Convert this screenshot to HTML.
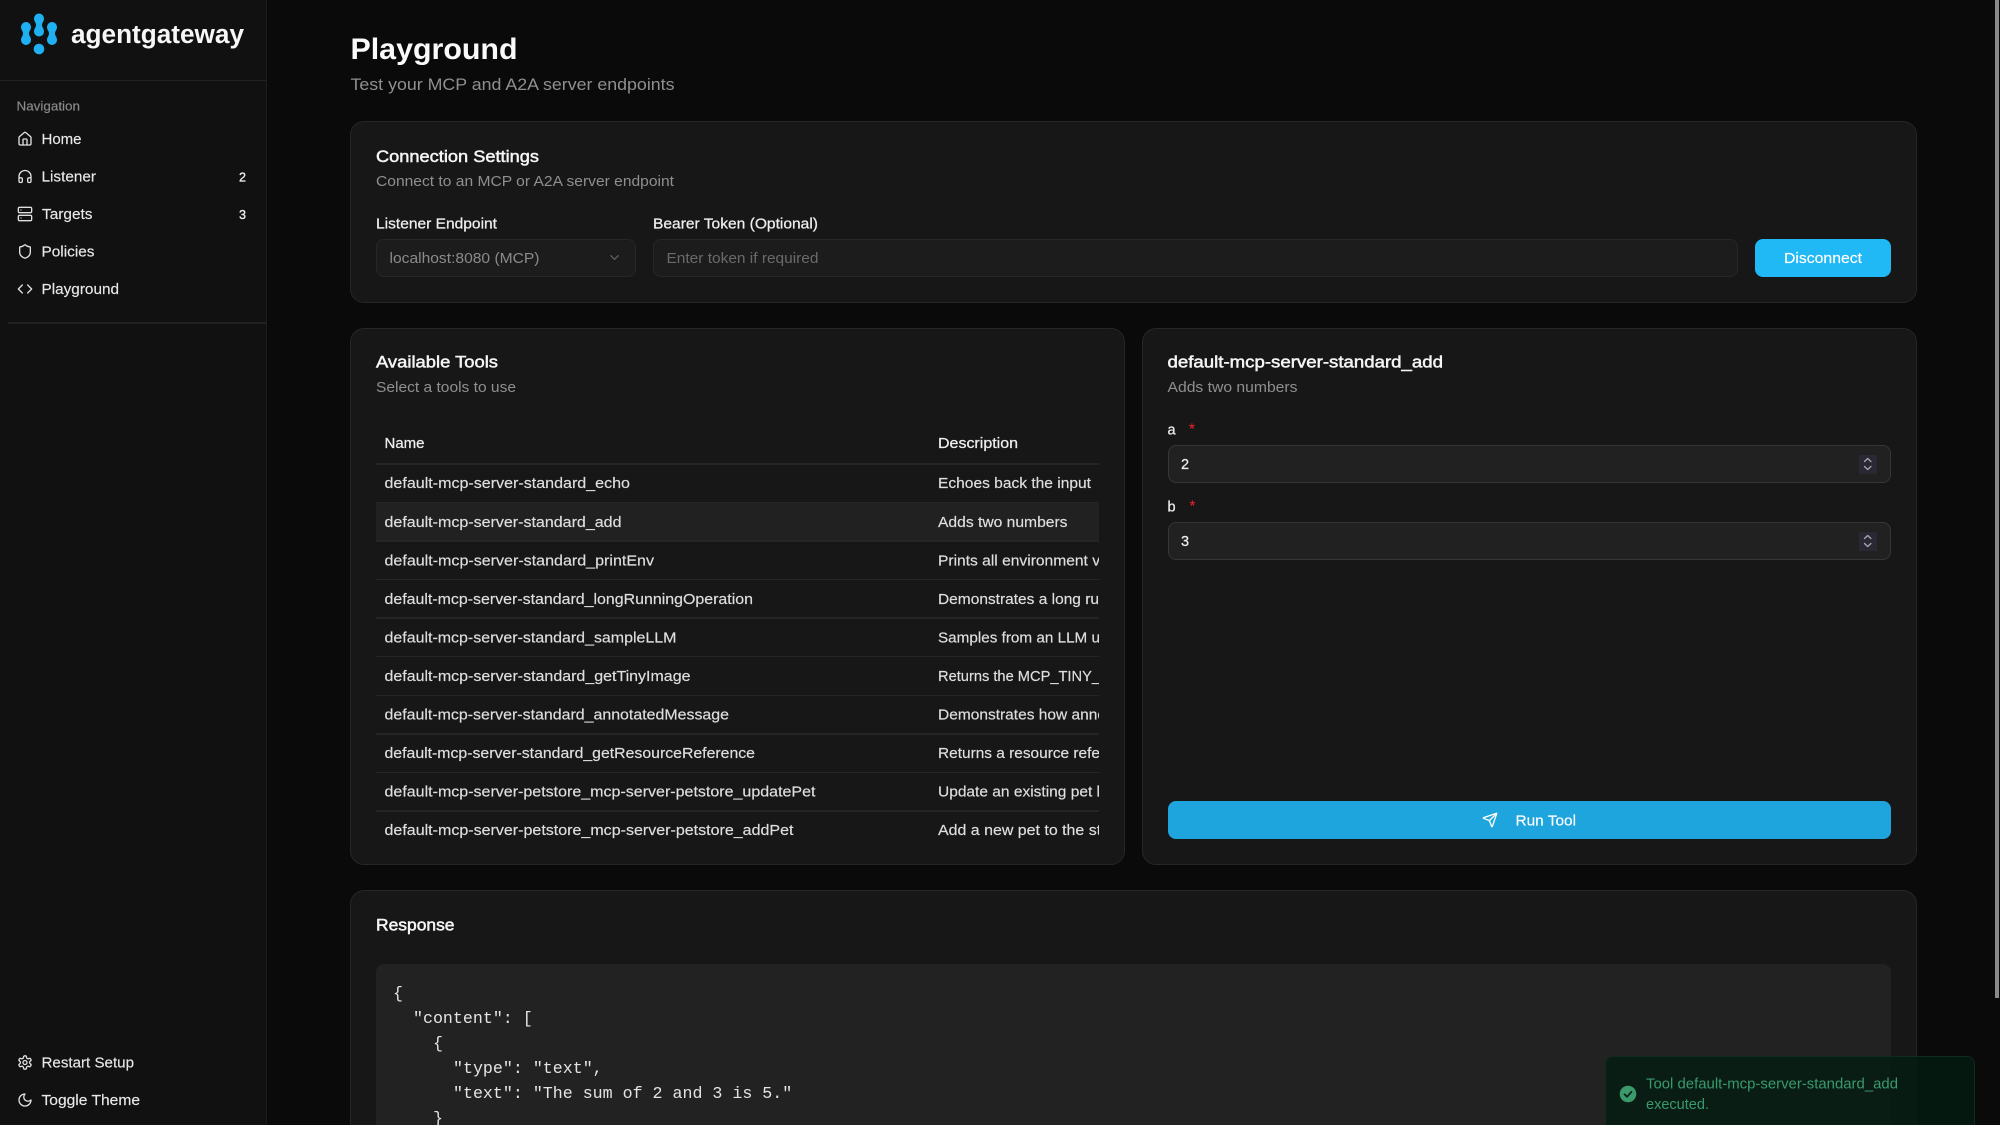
<!DOCTYPE html>
<html lang="en">
<head>
<meta charset="utf-8">
<title>Playground</title>
<style>
html,body{margin:0;padding:0;width:2000px;height:1125px;overflow:hidden;background:#0a0a0a;}
body{position:relative;font-family:"Liberation Sans",sans-serif;}
.b{position:absolute;box-sizing:border-box;}
.card{background:#171717;border:1.5px solid #262626;border-radius:14px;}
.field{background:#1c1c1c;border:1.5px solid #272727;border-radius:8px;}
.num{background:#212121;border:1.5px solid #363636;border-radius:8px;}
.spin{background:#2a2833;}
.line{background:#252525;height:1.5px;left:376px;width:723px;}
svg{position:absolute;left:0;top:0;}
text{font-family:"Liberation Sans",sans-serif;font-size:14.5px;fill:#e8e8e8;stroke:#e8e8e8;stroke-width:.15px;}
.m{font-size:14.5px;fill:#8f8f8f;stroke:none;}
.h{font-size:16.5px;fill:#f5f5f5;stroke:#f5f5f5;stroke-width:.5px;}
.l{font-size:14.5px;fill:#eeeeee;stroke:#eeeeee;stroke-width:.25px;}
.n{font-size:14.5px;fill:#dedede;stroke:#dedede;stroke-width:.18px;}
.c{font-family:"Liberation Mono",monospace;font-size:16.64px;fill:#e4e4e4;stroke:none;}
.t{font-size:14.5px;fill:#3a9a6c;stroke:none;}
.ic{fill:none;stroke:#e0e0e0;stroke-width:2;stroke-linecap:round;stroke-linejoin:round;}
</style>
</head>
<body>
<!-- sidebar -->
<div class="b" style="left:0;top:0;width:267px;height:1125px;background:#111111;border-right:1.5px solid #1c1c1c;"></div>
<div class="b" style="left:0;top:79.5px;width:266px;height:1.5px;background:#222;"></div>
<div class="b" style="left:8px;top:322px;width:258px;height:1.5px;background:#222;"></div>

<!-- connection card -->
<div class="b card" style="left:350px;top:121px;width:1567px;height:181.5px;"></div>
<div class="b field" style="left:376px;top:239px;width:260px;height:37.5px;"></div>
<div class="b field" style="left:653px;top:239px;width:1085px;height:37.5px;"></div>
<div class="b" style="left:1755px;top:239px;width:136px;height:37.5px;background:#20b8f5;border-radius:8px;"></div>

<!-- tools card -->
<div class="b card" style="left:350px;top:328px;width:775px;height:537px;"></div>
<div class="b" style="left:376px;top:502px;width:723px;height:39px;background:#212121;"></div>
<div class="b line" style="top:463px;"></div>
<div class="b line" style="top:501.5px;"></div>
<div class="b line" style="top:540px;"></div>
<div class="b line" style="top:578.5px;"></div>
<div class="b line" style="top:617px;"></div>
<div class="b line" style="top:655.5px;"></div>
<div class="b line" style="top:694.5px;"></div>
<div class="b line" style="top:733px;"></div>
<div class="b line" style="top:771.5px;"></div>
<div class="b line" style="top:810px;"></div>

<!-- form card -->
<div class="b card" style="left:1142px;top:328px;width:775px;height:537px;"></div>
<div class="b num" style="left:1167.5px;top:445px;width:723.5px;height:38px;"></div>
<div class="b num" style="left:1167.5px;top:522px;width:723.5px;height:38px;"></div>
<div class="b spin" style="left:1858.5px;top:454.5px;width:18.5px;height:19px;"></div>
<div class="b spin" style="left:1858.5px;top:531.5px;width:18.5px;height:19px;"></div>
<div class="b" style="left:1167.5px;top:801px;width:723.5px;height:38px;background:#1ea5dd;border-radius:8px;"></div>

<!-- response card -->
<div class="b card" style="left:350px;top:890px;width:1567px;height:235px;border-bottom:none;border-radius:14px 14px 0 0;"></div>
<div class="b" style="left:376px;top:964px;width:1515px;height:161px;background:#222222;border-radius:8px 8px 0 0;"></div>

<!-- scrollbar -->
<div class="b" style="left:1995px;top:0;width:4px;height:998px;background:#8a8a8a;"></div>

<svg width="2000" height="1125" viewBox="0 0 2000 1125" xmlns="http://www.w3.org/2000/svg">
<defs><clipPath id="tc"><rect x="930" y="460" width="169" height="400"/></clipPath></defs>

<!-- logo -->
<g fill="#1fb0f2">
<path d="M21 27a5 5 0 0 1 10 0c0 3-2 4-2 6.5s2 3.5 2 6.5a5 5 0 0 1-10 0c0-3 2-4 2-6.5s-2-3.5-2-6.500z"/>
<path d="M34 18.500a5 5 0 0 1 10 0c0 3-2 4-2 6.5s2 3.500 2 6.500a5 5 0 0 1-10 0c0-3 2-4 2-6.500s-2-3.500-2-6.500z"/>
<path d="M47 27a5 5 0 0 1 10 0c0 3-2 4-2 6.5s2 3.500 2 6.500a5 5 0 0 1-10 0c0-3 2-4 2-6.500s-2-3.500-2-6.500z"/>
<circle cx="39" cy="49" r="5.300"/>
</g>
<text x="71" y="43" textLength="173" lengthAdjust="spacingAndGlyphs" style="font-size:25.5px;font-weight:bold;fill:#f7f7f7;stroke:none">agentgateway</text>

<!-- nav -->
<text x="16.500" y="110.500" textLength="63.500" lengthAdjust="spacingAndGlyphs" style="font-size:12.5px;fill:#8a8a8a;stroke:#8a8a8a">Navigation</text>

<svg x="17" y="131" width="16" height="16" viewBox="0 0 24 24" class="ic"><path d="M15 21v-8a1 1 0 0 0-1-1h-4a1 1 0 0 0-1 1v8"/><path d="M3 10a2 2 0 0 1 .709-1.528l7-5.999a2 2 0 0 1 2.582 0l7 5.999A2 2 0 0 1 21 10v9a2 2 0 0 1-2 2H5a2 2 0 0 1-2-2z"/></svg>
<text x="41.500" y="144" textLength="40" lengthAdjust="spacingAndGlyphs">Home</text>

<svg x="17" y="168.500" width="16" height="16" viewBox="0 0 24 24" class="ic"><path d="M3 14h3a2 2 0 0 1 2 2v3a2 2 0 0 1-2 2H5a2 2 0 0 1-2-2v-7a9 9 0 0 1 18 0v7a2 2 0 0 1-2 2h-1a2 2 0 0 1-2-2v-3a2 2 0 0 1 2-2h3"/></svg>
<text x="41.500" y="181.500" textLength="54.500" lengthAdjust="spacingAndGlyphs">Listener</text>
<text x="239" y="181.500" style="font-size:12.5px;fill:#f0f0f0;stroke:#f0f0f0;stroke-width:.3px" textLength="7" lengthAdjust="spacingAndGlyphs">2</text>

<svg x="17" y="206" width="16" height="16" viewBox="0 0 24 24" class="ic"><rect x="2" y="2" width="20" height="8" rx="2"/><rect x="2" y="14" width="20" height="8" rx="2"/><path d="M6 6h.01M6 18h.01"/></svg>
<text x="42" y="219" textLength="50.500" lengthAdjust="spacingAndGlyphs">Targets</text>
<text x="239" y="219" style="font-size:12.5px;fill:#f0f0f0;stroke:#f0f0f0;stroke-width:.3px" textLength="7" lengthAdjust="spacingAndGlyphs">3</text>

<svg x="17" y="243.500" width="16" height="16" viewBox="0 0 24 24" class="ic"><path d="M20 13c0 5-3.500 7.500-7.660 8.950a1 1 0 0 1-.67-.01C7.500 20.500 4 18 4 13V6a1 1 0 0 1 1-1c2 0 4.500-1.200 6.240-2.720a1.170 1.170 0 0 1 1.520 0C14.510 3.810 17 5 19 5a1 1 0 0 1 1 1z"/></svg>
<text x="41.500" y="256.500" textLength="53" lengthAdjust="spacingAndGlyphs">Policies</text>

<svg x="17" y="281" width="16" height="16" viewBox="0 0 24 24" class="ic"><path d="m16 18 6-6-6-6"/><path d="m8 6-6 6 6 6"/></svg>
<text x="41.500" y="294" textLength="77.500" lengthAdjust="spacingAndGlyphs">Playground</text>

<svg x="17" y="1054.500" width="16" height="16" viewBox="0 0 24 24" class="ic"><path d="M12.220 2h-.44a2 2 0 0 0-2 2v.18a2 2 0 0 1-1 1.730l-.43.25a2 2 0 0 1-2 0l-.15-.08a2 2 0 0 0-2.730.73l-.22.38a2 2 0 0 0 .73 2.730l.15.1a2 2 0 0 1 1 1.720v.51a2 2 0 0 1-1 1.740l-.15.09a2 2 0 0 0-.73 2.730l.22.38a2 2 0 0 0 2.730.73l.15-.08a2 2 0 0 1 2 0l.43.25a2 2 0 0 1 1 1.730V20a2 2 0 0 0 2 2h.44a2 2 0 0 0 2-2v-.18a2 2 0 0 1 1-1.730l.43-.25a2 2 0 0 1 2 0l.15.08a2 2 0 0 0 2.730-.73l.22-.39a2 2 0 0 0-.73-2.730l-.15-.08a2 2 0 0 1-1-1.740v-.5a2 2 0 0 1 1-1.740l.15-.09a2 2 0 0 0 .73-2.730l-.22-.38a2 2 0 0 0-2.730-.73l-.15.08a2 2 0 0 1-2 0l-.43-.25a2 2 0 0 1-1-1.730V4a2 2 0 0 0-2-2z"/><circle cx="12" cy="12" r="3"/></svg>
<text x="41.500" y="1067.500" textLength="92.500" lengthAdjust="spacingAndGlyphs">Restart Setup</text>

<svg x="17" y="1092" width="16" height="16" viewBox="0 0 24 24" class="ic"><path d="M12 3a6 6 0 0 0 9 9 9 9 0 1 1-9-9Z"/></svg>
<text x="41.500" y="1105" textLength="98.500" lengthAdjust="spacingAndGlyphs">Toggle Theme</text>

<!-- header -->
<text x="350.500" y="59" textLength="167" lengthAdjust="spacingAndGlyphs" style="font-size:30px;font-weight:bold;fill:#fafafa;stroke:none">Playground</text>
<text x="350.500" y="90" textLength="324" lengthAdjust="spacingAndGlyphs" style="font-size:16.500px;fill:#8f8f8f;stroke:none">Test your MCP and A2A server endpoints</text>

<!-- connection -->
<text class="h" x="376" y="162" textLength="163" lengthAdjust="spacingAndGlyphs">Connection Settings</text>
<text class="m" x="376" y="186" textLength="298" lengthAdjust="spacingAndGlyphs">Connect to an MCP or A2A server endpoint</text>
<text class="l" x="376" y="228.500" textLength="121" lengthAdjust="spacingAndGlyphs">Listener Endpoint</text>
<text class="l" x="653" y="228.500" textLength="165" lengthAdjust="spacingAndGlyphs">Bearer Token (Optional)</text>
<text class="m" x="389.500" y="263" textLength="150" lengthAdjust="spacingAndGlyphs" style="fill:#8a8a8a">localhost:8080 (MCP)</text>
<svg x="607" y="250" width="15" height="15" viewBox="0 0 24 24" fill="none" stroke="#5e5e5e" stroke-width="2" stroke-linecap="round" stroke-linejoin="round"><path d="m6 9 6 6 6-6"/></svg>
<text class="m" x="666.500" y="263" textLength="152" lengthAdjust="spacingAndGlyphs" style="fill:#6a6a6a">Enter token if required</text>
<text x="1784" y="263" textLength="78" lengthAdjust="spacingAndGlyphs" style="font-size:14.500px;fill:#ffffff;stroke:#ffffff">Disconnect</text>

<!-- tools -->
<text class="h" x="376" y="367.500" textLength="122" lengthAdjust="spacingAndGlyphs">Available Tools</text>
<text class="m" x="376" y="392" textLength="140" lengthAdjust="spacingAndGlyphs">Select a tools to use</text>
<text class="l" x="384.500" y="448" textLength="40" lengthAdjust="spacingAndGlyphs">Name</text>
<text class="l" x="938" y="448" textLength="80" lengthAdjust="spacingAndGlyphs">Description</text>

<text class="n" x="384.500" y="488" textLength="245.500" lengthAdjust="spacingAndGlyphs">default-mcp-server-standard_echo</text>
<text class="n" x="384.500" y="527" textLength="237" lengthAdjust="spacingAndGlyphs">default-mcp-server-standard_add</text>
<text class="n" x="384.500" y="565.500" textLength="269.500" lengthAdjust="spacingAndGlyphs">default-mcp-server-standard_printEnv</text>
<text class="n" x="384.500" y="604" textLength="368.500" lengthAdjust="spacingAndGlyphs">default-mcp-server-standard_longRunningOperation</text>
<text class="n" x="384.500" y="642.500" textLength="292" lengthAdjust="spacingAndGlyphs">default-mcp-server-standard_sampleLLM</text>
<text class="n" x="384.500" y="681" textLength="306" lengthAdjust="spacingAndGlyphs">default-mcp-server-standard_getTinyImage</text>
<text class="n" x="384.500" y="719.500" textLength="344.500" lengthAdjust="spacingAndGlyphs">default-mcp-server-standard_annotatedMessage</text>
<text class="n" x="384.500" y="758" textLength="370.500" lengthAdjust="spacingAndGlyphs">default-mcp-server-standard_getResourceReference</text>
<text class="n" x="384.500" y="796.500" textLength="431" lengthAdjust="spacingAndGlyphs">default-mcp-server-petstore_mcp-server-petstore_updatePet</text>
<text class="n" x="384.500" y="835" textLength="409" lengthAdjust="spacingAndGlyphs">default-mcp-server-petstore_mcp-server-petstore_addPet</text>

<g clip-path="url(#tc)">
<text class="n" x="938" y="488" textLength="153" lengthAdjust="spacingAndGlyphs">Echoes back the input</text>
<text class="n" x="938" y="527" textLength="129.500" lengthAdjust="spacingAndGlyphs">Adds two numbers</text>
<text class="n" x="938" y="565.500" textLength="162" lengthAdjust="spacingAndGlyphs">Prints all environment v</text>
<text class="n" x="938" y="604" textLength="161" lengthAdjust="spacingAndGlyphs">Demonstrates a long ru</text>
<text class="n" x="938" y="642.500" textLength="162" lengthAdjust="spacingAndGlyphs">Samples from an LLM u</text>
<text class="n" x="938" y="681" textLength="162" lengthAdjust="spacingAndGlyphs">Returns the MCP_TINY_</text>
<text class="n" x="938" y="719.500" textLength="168" lengthAdjust="spacingAndGlyphs">Demonstrates how anno</text>
<text class="n" x="938" y="758" textLength="162" lengthAdjust="spacingAndGlyphs">Returns a resource refe</text>
<text class="n" x="938" y="796.500" textLength="162" lengthAdjust="spacingAndGlyphs">Update an existing pet l</text>
<text class="n" x="938" y="835" textLength="172" lengthAdjust="spacingAndGlyphs">Add a new pet to the sto</text>
</g>

<!-- form -->
<text class="h" x="1167.500" y="367.500" textLength="275.500" lengthAdjust="spacingAndGlyphs">default-mcp-server-standard_add</text>
<text class="m" x="1167.500" y="392" textLength="130" lengthAdjust="spacingAndGlyphs">Adds two numbers</text>
<text class="l" x="1167.500" y="434.500">a</text>
<text x="1189" y="433.500" style="font-size:15px;fill:#e5202c;stroke:#e5202c">*</text>
<text class="l" x="1167.500" y="511.500">b</text>
<text x="1189.500" y="510.500" style="font-size:15px;fill:#e5202c;stroke:#e5202c">*</text>
<text class="l" x="1181" y="469">2</text>
<text class="l" x="1181" y="546">3</text>
<g fill="none" stroke="#a8a8b0" stroke-width="1.300" stroke-linecap="round" stroke-linejoin="round">
<path d="M1864.500 461.500l3.200-3 3.200 3M1864.500 466.500l3.200 3 3.200-3"/>
<path d="M1864.500 538.500l3.200-3 3.200 3M1864.500 543.500l3.200 3 3.200-3"/>
</g>
<svg x="1482" y="812" width="16" height="16" viewBox="0 0 24 24" fill="none" stroke="#ffffff" stroke-width="2" stroke-linecap="round" stroke-linejoin="round"><path d="M14.536 21.686a.5.5 0 0 0 .937-.024l6.500-19a.496.496 0 0 0-.635-.635l-19 6.500a.5.5 0 0 0-.024.937l7.930 3.180a2 2 0 0 1 1.112 1.110z"/><path d="m21.854 2.147-10.940 10.939"/></svg>
<text x="1515.500" y="825.500" textLength="60.500" lengthAdjust="spacingAndGlyphs" style="font-size:14.500px;fill:#ffffff;stroke:#ffffff">Run Tool</text>

<!-- response -->
<text class="h" x="376" y="930.500" textLength="78.500" lengthAdjust="spacingAndGlyphs">Response</text>
<text class="c" x="393" y="998">{</text>
<text class="c" x="413" y="1023">"content": [</text>
<text class="c" x="433" y="1048">{</text>
<text class="c" x="453" y="1073">"type": "text",</text>
<text class="c" x="453" y="1098">"text": "The sum of 2 and 3 is 5."</text>
<text class="c" x="433" y="1123">}</text>
</svg>

<!-- toast -->
<div class="b" style="left:1605px;top:1056px;width:370px;height:69px;background:rgba(4,28,18,.82);border:1.5px solid #0f2c1d;border-bottom:none;border-radius:8px 8px 0 0;"></div>
<svg width="2000" height="1125" viewBox="0 0 2000 1125" xmlns="http://www.w3.org/2000/svg">
<circle cx="1628" cy="1094" r="8.300" fill="#3a9a6c"/>
<path d="M1624.500 1094.300l2.500 2.500 4.500-5" fill="none" stroke="#0c1f17" stroke-width="1.800" stroke-linecap="round" stroke-linejoin="round"/>
<text class="t" x="1646" y="1088.500" textLength="252" lengthAdjust="spacingAndGlyphs">Tool default-mcp-server-standard_add</text>
<text class="t" x="1646" y="1109" textLength="63" lengthAdjust="spacingAndGlyphs">executed.</text>
</svg>
</body>
</html>
